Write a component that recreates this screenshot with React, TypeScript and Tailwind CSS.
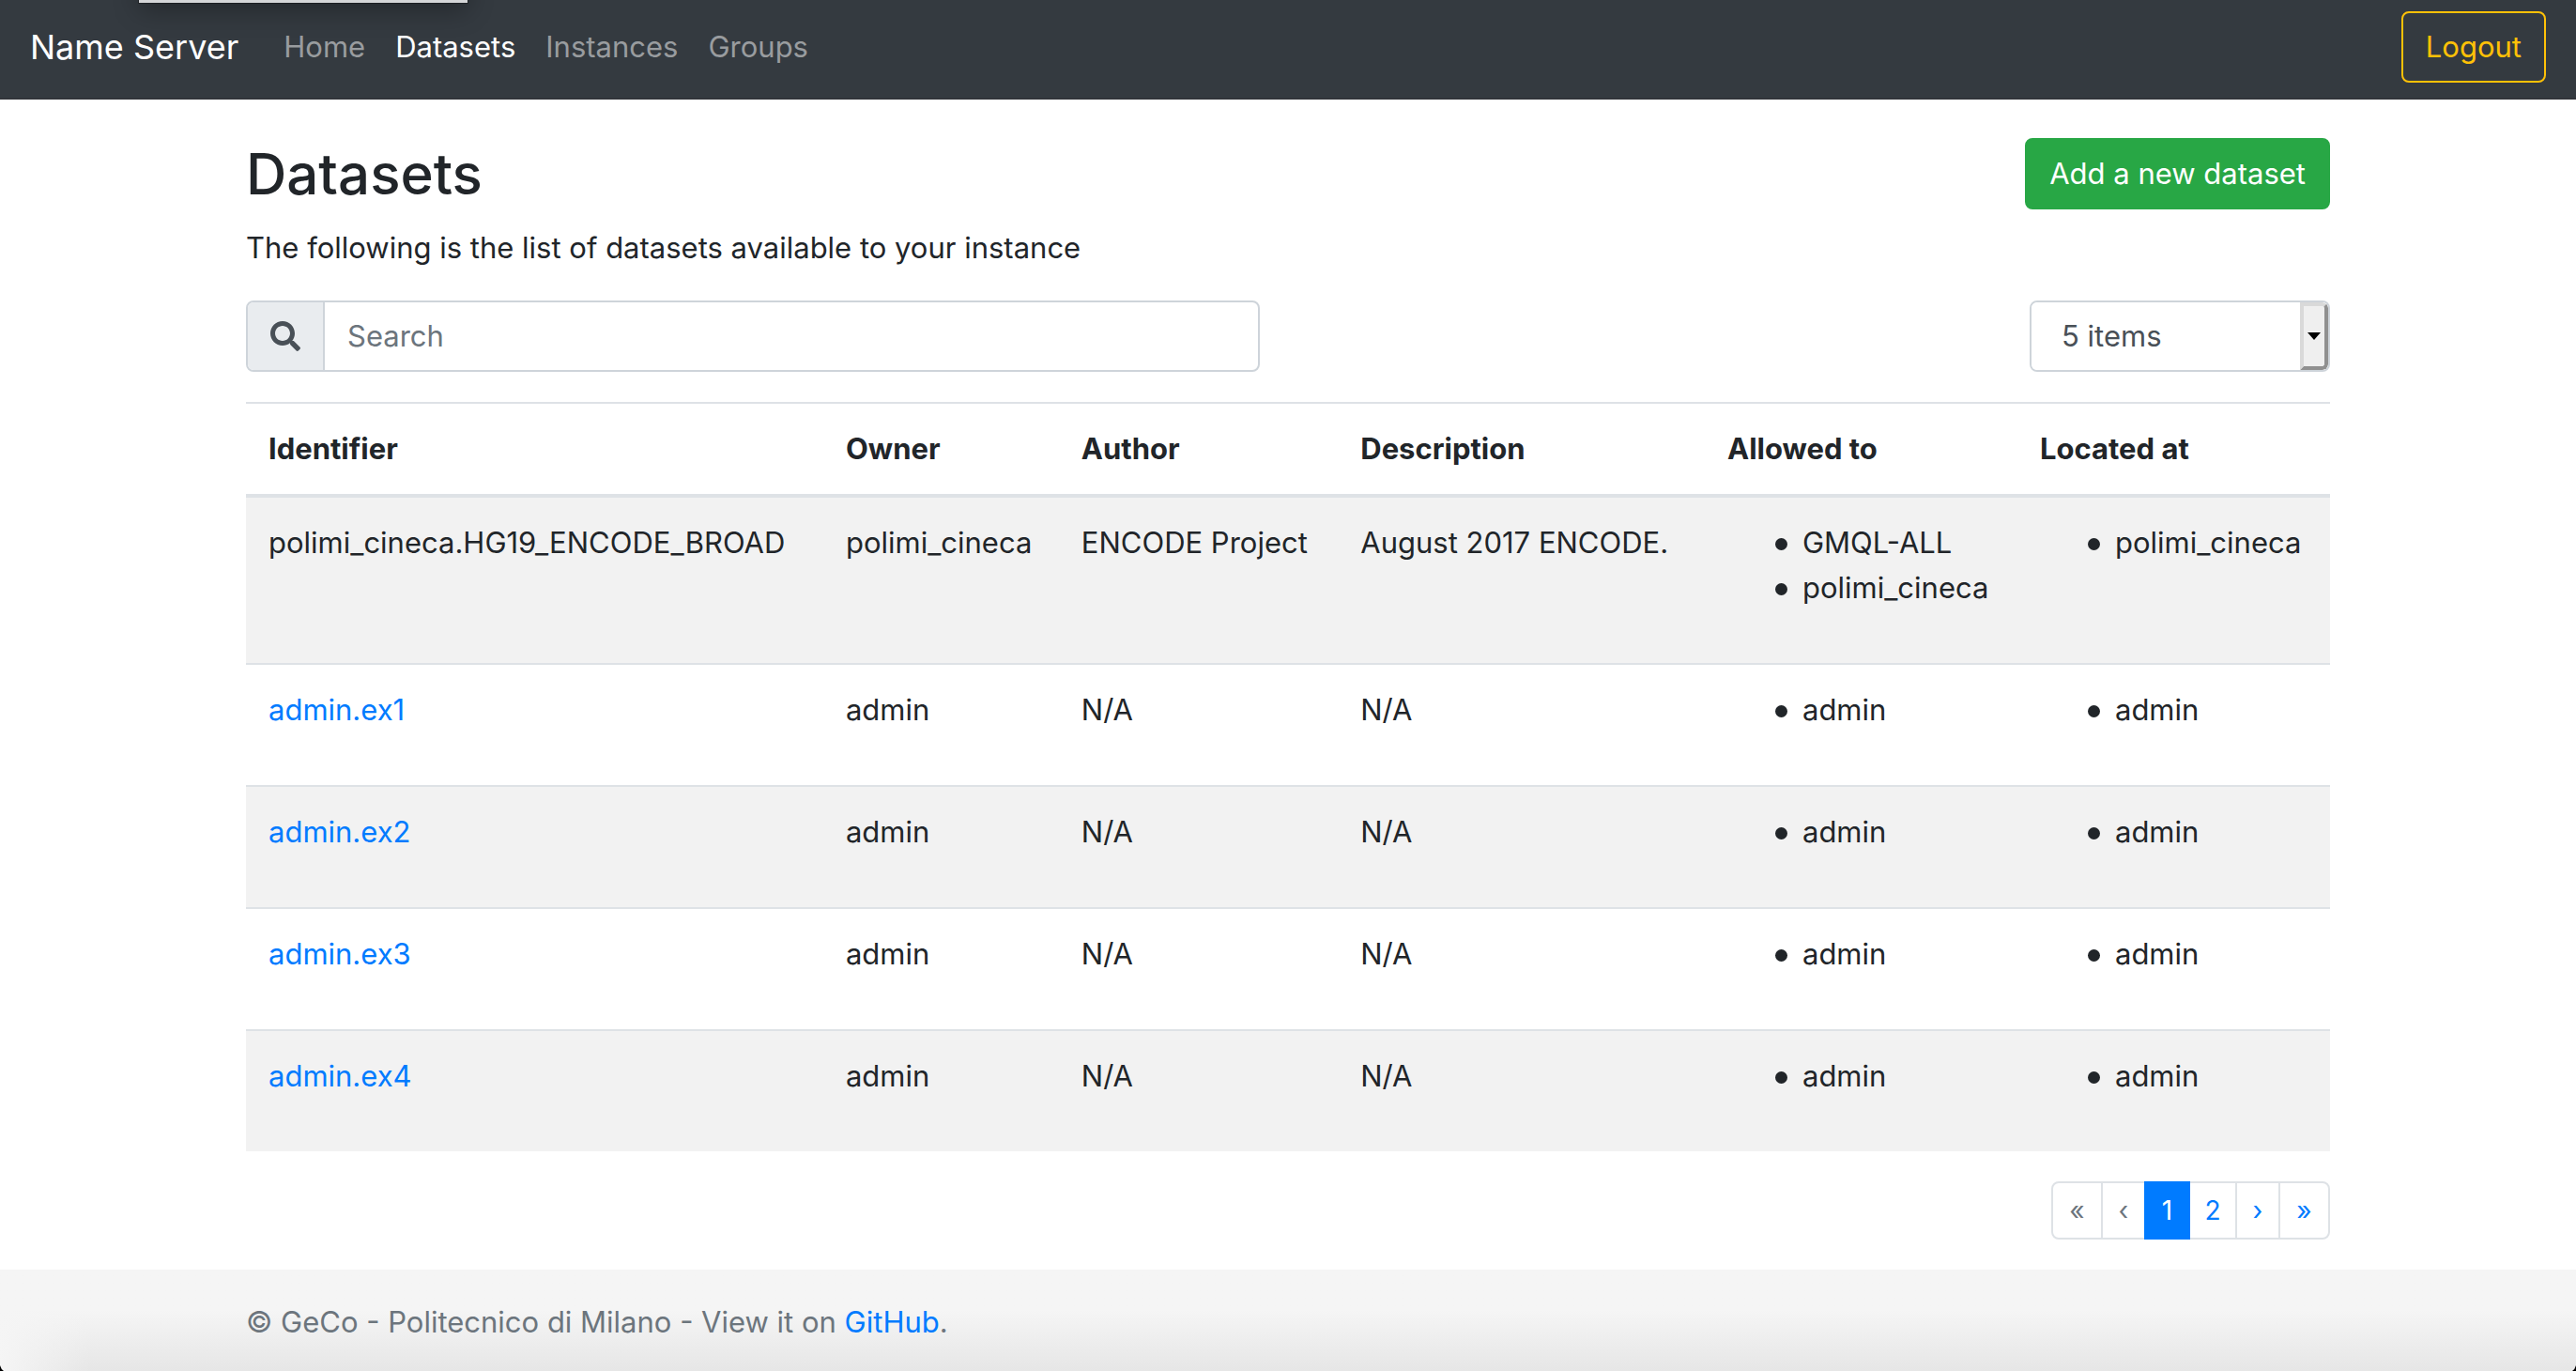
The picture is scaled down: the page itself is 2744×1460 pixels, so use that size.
import React from "react";
import { FaSearch } from "react-icons/fa";

type Dataset = {
  id: string;
  link: boolean;
  owner: string;
  author: string;
  description: string;
  allowed: string[];
  located: string[];
};

const example = (n: number): Dataset => ({
  id: `admin.ex${n}`,
  link: true,
  owner: "admin",
  author: "N/A",
  description: "N/A",
  allowed: ["admin"],
  located: ["admin"],
});

const datasets: Dataset[] = [
  {
    id: "polimi_cineca.HG19_ENCODE_BROAD",
    link: false,
    owner: "polimi_cineca",
    author: "ENCODE Project",
    description: "August 2017 ENCODE.",
    allowed: ["GMQL-ALL", "polimi_cineca"],
    located: ["polimi_cineca"],
  },
  example(1),
  example(2),
  example(3),
  example(4),
];

const navLinks = ["Home", "Datasets", "Instances", "Groups"];

const columns = [
  { label: "Identifier", width: "w-[27.7%]" },
  { label: "Owner", width: "w-[11.3%]" },
  { label: "Author", width: "w-[13.4%]" },
  { label: "Description", width: "w-[17.6%]" },
  { label: "Allowed to", width: "w-[15%]" },
  { label: "Located at", width: "w-[15%]" },
];

const pages = [
  { label: "«", name: "First page", style: "w-[55px] rounded-l-[8px] border-[#dee2e6] text-[#6c757d]" },
  { label: "‹", name: "Previous page", style: "w-[48px] border-[#dee2e6] text-[#6c757d]" },
  { label: "1", name: "Page 1", style: "z-10 w-[49px] border-[#007bff] bg-[#007bff] text-white" },
  { label: "2", name: "Page 2", style: "w-[52px] border-[#dee2e6] text-[#007bff]" },
  { label: "›", name: "Next page", style: "w-[48px] border-[#dee2e6] text-[#007bff]" },
  { label: "»", name: "Last page", style: "w-[55px] rounded-r-[8px] border-[#dee2e6] text-[#007bff]" },
];

function Navbar() {
  return (
    <header className="relative flex h-[106px] items-start justify-between overflow-hidden border-b-2 border-[#32353b] bg-[#343a40] px-8 pt-3">
      <div
        aria-hidden="true"
        className="absolute left-[148px] top-[-57px] h-[60px] w-[350px] bg-[#d5d6d8] shadow-[0_0_0_1px_rgba(0,0,0,0.3),0_8px_28px_rgba(0,0,0,0.3)]"
      />
      <nav className="flex h-[76px] items-center">
        <a href="#" className="mr-12 text-[36px] text-white">
          Name Server
        </a>
        <ul className="flex gap-8">
          {navLinks.map((label) => (
            <li key={label}>
              <a
                href="#"
                className={label === "Datasets" ? "text-white" : "text-[#999c9f]"}
              >
                {label}
              </a>
            </li>
          ))}
        </ul>
      </nav>
      <button
        type="button"
        className="h-[76px] rounded-[8px] border-2 border-[#ffc107] px-6 text-[#ffc107]"
      >
        Logout
      </button>
    </header>
  );
}

function Toolbar() {
  return (
    <div className="flex justify-between">
      <label className="flex h-[76px] w-[1080px] rounded-[8px] border-2 border-[#ced4da]">
        <span className="flex w-[82px] shrink-0 items-center justify-center rounded-l-[6px] border-r-2 border-[#ced4da] bg-[#e9ecef]">
          <FaSearch className="size-8 text-[#495057]" aria-hidden="true" />
        </span>
        <input
          type="text"
          aria-label="Search"
          placeholder="Search"
          className="min-w-0 flex-1 rounded-r-[6px] px-6 text-[#495057] outline-none placeholder:text-[#6c757d]"
        />
      </label>
      <div className="relative flex h-[76px] w-[320px] overflow-hidden rounded-[8px] border-2 border-[#ced4da]">
        <select
          aria-label="Items per page"
          className="h-full w-full appearance-none bg-white pl-8 text-[#495057] outline-none"
        >
          <option>5 items</option>
          <option>10 items</option>
        </select>
        <span
          aria-hidden="true"
          className="pointer-events-none absolute inset-y-0 right-0 flex w-[30px] items-center justify-center rounded-r-[6px] border-4 border-b-[#909090] border-l-[#d9d9d9] border-r-[#909090] border-t-[#d9d9d9] bg-[#efefef]"
        >
          <svg viewBox="0 0 14 8" className="h-2 w-[14px]">
            <path d="M0 0h14L7 8z" fill="#000" />
          </svg>
        </span>
      </div>
    </div>
  );
}

function BulletList({ items }: { items: string[] }) {
  return (
    <ul className="mb-8 pl-[80px]">
      {items.map((item) => (
        <li
          key={item}
          className="relative before:absolute before:left-[-29px] before:top-[19px] before:size-[13px] before:rounded-full before:bg-[#212529]"
        >
          {item}
        </li>
      ))}
    </ul>
  );
}

function DatasetTable() {
  return (
    <table className="mt-8 w-full table-fixed border-separate border-spacing-0">
      <thead>
        <tr>
          {columns.map((c) => (
            <th
              key={c.label}
              scope="col"
              className={`${c.width} border-b-4 border-t-2 border-[#dee2e6] p-6 text-left font-bold`}
            >
              {c.label}
            </th>
          ))}
        </tr>
      </thead>
      <tbody className="[&>tr:nth-child(odd)]:bg-[#f2f2f2] [&>tr:not(:first-child)>td]:border-t-2 [&_td]:border-[#dee2e6] [&_td]:px-6 [&_td]:py-6 [&_td]:align-top">
        {datasets.map((d) => (
          <tr key={d.id}>
            <td>
              {d.link ? (
                <a href="#" className="text-[#007bff]">
                  {d.id}
                </a>
              ) : (
                d.id
              )}
            </td>
            <td>{d.owner}</td>
            <td>{d.author}</td>
            <td>{d.description}</td>
            <td>
              <BulletList items={d.allowed} />
            </td>
            <td>
              <BulletList items={d.located} />
            </td>
          </tr>
        ))}
      </tbody>
    </table>
  );
}

function Pagination() {
  return (
    <nav aria-label="Pages" className="my-8 flex justify-end">
      {pages.map((p) => (
        <button
          key={p.label}
          type="button"
          aria-label={p.name}
          className={`-ml-[2px] h-[62px] border-2 text-[28px] leading-[42px] ${p.style}`}
        >
          {p.label}
        </button>
      ))}
    </nav>
  );
}

function Footer() {
  return (
    <footer className="relative flex-1 bg-linear-to-b from-[#f5f5f5] from-40% to-[#e6e6e6] pt-8">
      <div
        aria-hidden="true"
        className="absolute inset-y-0 left-0 w-24 bg-linear-to-r from-[#f5f5f5] to-transparent"
      />
      <svg aria-hidden="true" viewBox="0 0 4 6" className="absolute bottom-0 left-0 h-[6px] w-1">
        <path d="M0 0Q1 4 4 6H0z" fill="#000" />
      </svg>
      <svg aria-hidden="true" viewBox="0 0 4 6" className="absolute bottom-0 right-0 h-[6px] w-1">
        <path d="M4 0Q3 4 0 6H4z" fill="#000" />
      </svg>
      <div className="mx-auto w-full max-w-[2280px] px-[30px] text-[#6c757d]">
        © GeCo - Politecnico di Milano - View it on{" "}
        <a href="#" className="text-[#007bff]">
          GitHub
        </a>
        .
      </div>
    </footer>
  );
}

export default function App() {
  return (
    <div className="flex min-h-screen flex-col bg-white font-[Inter,'Liberation_Sans',sans-serif] text-[31px] leading-[48px] text-[#212529]">
      <Navbar />
      <main className="mx-auto w-full max-w-[2280px] px-[30px] pt-[41px]">
        <div className="flex items-start justify-between">
          <h1 className="mb-4 text-[60px] font-medium leading-[77px]">Datasets</h1>
          <button
            type="button"
            className="h-[76px] rounded-[8px] border-2 border-[#28a745] bg-[#28a745] px-6 text-white"
          >
            Add a new dataset
          </button>
        </div>
        <p className="mb-8">The following is the list of datasets available to your instance</p>
        <Toolbar />
        <DatasetTable />
        <Pagination />
      </main>
      <Footer />
    </div>
  );
}
